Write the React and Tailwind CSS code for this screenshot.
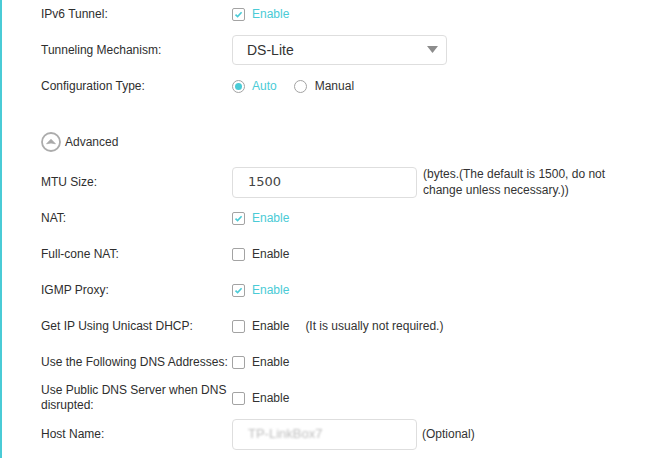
import React from 'react';

const TEAL = 'text-[#4acbd6]';

function Check({ checked }) {
  return (
    <span className="w-[13px] h-[13px] border border-[#a3a3a3] rounded-[2px] bg-white flex items-center justify-center shrink-0">
      {checked && (
        <svg width="9" height="9" viewBox="0 0 9 9">
          <path d="M1.5 4.6 L3.6 6.6 L7.6 2.2" fill="none" stroke="#4acbd6" strokeWidth="1.6" />
        </svg>
      )}
    </span>
  );
}

function Radio({ checked }) {
  return (
    <span className="w-[13px] h-[13px] border border-[#a3a3a3] rounded-full bg-white flex items-center justify-center shrink-0">
      {checked && <span className="w-[7px] h-[7px] rounded-full bg-[#4acbd6]" />}
    </span>
  );
}

function CheckField({ checked, note }) {
  return (
    <div className="flex items-center">
      <Check checked={checked} />
      <span className={`ml-[7px] ${checked ? TEAL : 'text-[#333]'}`}>Enable</span>
      {note && <span className="ml-[16px] text-[#333]">{note}</span>}
    </div>
  );
}

function Row({ label, children, h = 'h-[36px]' }) {
  return (
    <div className={`flex items-center ${h}`}>
      <div className="w-[191px] shrink-0 leading-[15px] text-[#2e2e2e]">{label}</div>
      {children}
    </div>
  );
}

export default function App() {
  return (
    <div
      className="w-[662px] h-[458px] bg-white overflow-hidden border-l-2 border-[#4acbd6] text-[12px]"
      style={{ fontFamily: '"Liberation Sans", Arial, sans-serif' }}
    >
      <div className="pl-[39px] -mt-[4px]">
        <Row label="IPv6 Tunnel:">
          <CheckField checked />
        </Row>
        <Row label="Tunneling Mechanism:">
          <div className="w-[215px] h-[30px] border border-[#dedede] rounded-[4px] flex items-center justify-between pl-[14px] pr-[8px] text-[14px] text-[#333]">
            <span>DS-Lite</span>
            <svg width="11" height="8" viewBox="0 0 11 8">
              <path d="M0 0 H11 L5.5 7 Z" fill="#8c8c8c" />
            </svg>
          </div>
        </Row>
        <Row label="Configuration Type:">
          <div className="flex items-center">
            <Radio checked />
            <span className={`ml-[7px] ${TEAL}`}>Auto</span>
            <span className="ml-[17px]"><Radio /></span>
            <span className="ml-[8px] text-[#333]">Manual</span>
          </div>
        </Row>
        <div className="h-[60px] pt-[16px] flex items-center">
          <svg width="20" height="20" viewBox="0 0 20 20">
            <circle cx="10" cy="10" r="9" fill="none" stroke="#acacac" strokeWidth="1.8" />
            <path d="M5.6 11.8 L10 7.3 L14.4 11.8 Q10 10.2 5.6 11.8 Z" fill="#a8a8a8" stroke="#a8a8a8" strokeWidth="0.8" strokeLinejoin="round" />
          </svg>
          <span className="ml-[4px] text-[#333]">Advanced</span>
        </div>
        <Row label="MTU Size:">
          <div className="w-[185px] h-[31px] border border-[#dedede] rounded-[4px] flex items-center pl-[15px] text-[13px] text-[#444] shrink-0" style={{ fontFamily: '"DejaVu Sans", sans-serif' }}>
            1500
          </div>
          <div className="ml-[6px] leading-[16px] text-[#333]">
            (bytes.(The default is 1500, do not<br />change unless necessary.))
          </div>
        </Row>
        <Row label="NAT:">
          <CheckField checked />
        </Row>
        <Row label="Full-cone NAT:">
          <CheckField />
        </Row>
        <Row label="IGMP Proxy:">
          <CheckField checked />
        </Row>
        <Row label="Get IP Using Unicast DHCP:">
          <CheckField note="(It is usually not required.)" />
        </Row>
        <Row label="Use the Following DNS Addresses:">
          <CheckField />
        </Row>
        <Row label={<>Use Public DNS Server when DNS<br />disrupted:</>}>
          <CheckField />
        </Row>
        <Row label="Host Name:">
          <div className="w-[185px] h-[31px] border border-[#dedede] rounded-[4px] flex items-center pl-[15px] shrink-0 overflow-hidden">
            <span className="text-[13px] text-[#bdbdbd] blur-[1.2px]">TP-LinkBox7</span>
          </div>
          <span className="ml-[5px] text-[#333]">(Optional)</span>
        </Row>
      </div>
    </div>
  );
}
